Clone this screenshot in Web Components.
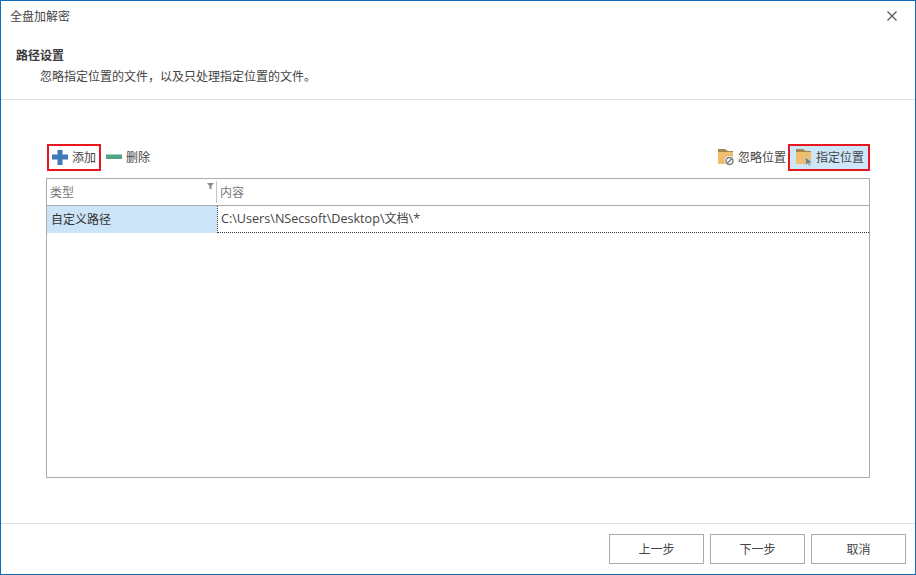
<!DOCTYPE html>
<html lang="zh">
<head>
<meta charset="utf-8">
<title>全盘加解密</title>
<style>
    html, body { margin: 0; height: 100%; background: #fff; }
</style>
</head>
<body>
<wizard-window heading="全盘加解密">
    <wizard-header heading="路径设置" note="忽略指定位置的文件&#xFF0C;以及只处理指定位置的文件。"></wizard-header>
    <path-panel></path-panel>
    <wizard-footer></wizard-footer>
</wizard-window>

<script>
const FONT = '"Open Sans", "Noto Sans CJK SC", sans-serif';

class WizardWindow extends HTMLElement {
    constructor() {
        super();
        this.attachShadow({ mode: 'open' });
    }

    connectedCallback() {
        this.shadowRoot.innerHTML = `
            <style>
                :host {
                    display: flex;
                    flex-direction: column;
                    box-sizing: border-box;
                    width: 916px;
                    height: 575px;
                    border: 1px solid #0b6cbc;
                    font-family: ${FONT};
                    font-size: 12px;
                    color: #444;
                    background: #fff;
                }
                .title {
                    display: flex;
                    justify-content: space-between;
                    align-items: center;
                    box-sizing: border-box;
                    height: 29px;
                    padding: 1px 18px 0 9px;
                    flex: none;
                }
                svg { display: block; }
            </style>
            <div class="title">
                <span>${this.getAttribute('heading')}</span>
                <svg width="10" height="10" viewBox="0 0 10 10"><path d="M.5.5l9 9M9.500.5l-9 9" stroke="#555" stroke-width="1.200" fill="none"/></svg>
            </div>
            <slot></slot>
        `;
    }
}

class WizardHeader extends HTMLElement {
    constructor() {
        super();
        this.attachShadow({ mode: 'open' });
    }

    connectedCallback() {
        this.shadowRoot.innerHTML = `
            <style>
                :host {
                    display: block;
                    flex: none;
                    height: 70px;
                    box-sizing: border-box;
                    padding: 17px 0 0 15px;
                    border-bottom: 1px solid #e0e0e0;
                }
                .h { font-weight: 700; line-height: 18px; color: #3a3a3a; }
                .n { margin: 3px 0 0 24px; line-height: 18px; }
            </style>
            <div class="h">${this.getAttribute('heading')}</div>
            <div class="n">${this.getAttribute('note')}</div>
        `;
    }
}

class ToolButton extends HTMLElement {
    constructor() {
        super();
        this.attachShadow({ mode: 'open' });
    }

    connectedCallback() {
        this.shadowRoot.innerHTML = `
            <style>
                :host {
                    display: flex;
                    align-items: center;
                    gap: var(--gap, 4px);
                    box-sizing: border-box;
                    height: 27px;
                    padding: 0 var(--pad-r, 3px) 0 var(--pad-l, 3px);
                    border: 2px solid transparent;
                    line-height: 18px;
                }
                :host([marked]) { border-color: #e8161f; }
                :host([active]) { background: #cde6f8; }
                ::slotted(svg) { display: block; flex: none; }
            </style>
            <slot name="icon"></slot>
            <span><slot></slot></span>
        `;
    }
}

class PathGrid extends HTMLElement {
    constructor() {
        super();
        this.attachShadow({ mode: 'open' });
    }

    connectedCallback() {
        this.shadowRoot.innerHTML = `
            <style>
                :host {
                    display: grid;
                    grid-template-columns: 170px 1fr;
                    grid-template-rows: 27px 27px 1fr;
                    flex: 1;
                    margin-top: 7px;
                    border: 1px solid #ababab;
                    line-height: 18px;
                }
                .hd {
                    position: relative;
                    display: flex;
                    align-items: center;
                    padding: 2px 0 0 3px;
                    color: #777;
                    border-bottom: 1px solid #ababab;
                }
                .hd.first::after {
                    content: "";
                    position: absolute;
                    right: 0;
                    top: 2px;
                    bottom: 2px;
                    width: 1px;
                    background: #c4c4c4;
                }
                .filter { position: absolute; right: 3px; top: 4px; }
                .type {
                    display: flex;
                    align-items: center;
                    padding-left: 4px;
                    background: #cce4f7;
                    color: #333;
                }
                .value {
                    display: flex;
                    align-items: center;
                    margin-top: -1px;
                    padding: 0 0 1px 3px;
                    border: 1px dotted #333;
                    border-right: 0;
                    color: #444;
                    white-space: pre;
                }
                .lat { font-size: 12.600px; }
            </style>
            <div class="hd first">类型
                <svg class="filter" width="7" height="6" viewBox="0 0 7 6"><path d="M0 0h7L4.500 3v3h-2V3z" fill="#8a8a8a"/></svg>
            </div>
            <div class="hd">内容</div>
            <div class="type">自定义路径</div>
            <div class="value"><span class="lat">C:\\Users\\NSecsoft\\Desktop\\</span><span>文档</span><span class="lat">\\*</span></div>
        `;
    }
}

class PathPanel extends HTMLElement {
    constructor() {
        super();
        this.attachShadow({ mode: 'open' });
    }

    connectedCallback() {
        const folder = `<path d="M0 3h15v12H0z" fill="#efbd6e"/><path d="M0 0h7l3 2h5v1H0z" fill="#a4864f"/>`;
        this.shadowRoot.innerHTML = `
            <style>
                :host {
                    display: flex;
                    flex-direction: column;
                    flex: 1;
                    min-height: 0;
                    padding: 44px 45px 45px;
                }
                .bar { display: flex; justify-content: space-between; padding-left: 1px; }
                .group { display: flex; gap: 3px; }
                .ignore { --pad-l: 0px; --pad-r: 0px; --gap: 2px; }
                .locate { --pad-l: 6px; --pad-r: 4px; --gap: 2px; }
                .remove { --pad-l: 0px; }
            </style>
            <div class="bar">
                <div class="group">
                    <tool-button marked>
                        <svg slot="icon" width="16" height="15" viewBox="0 0 16 15"><path d="M5.500 0h5v4.500H16v5h-5.500V15h-5V9.500H0v-5h5.500z" fill="#3d7ab8"/></svg>
                        添加
                    </tool-button>
                    <tool-button class="remove">
                        <svg slot="icon" width="16" height="15" viewBox="0 0 16 15"><rect y="4.500" width="16" height="4.500" fill="#4fa582"/></svg>
                        删除
                    </tool-button>
                </div>
                <div class="group" style="gap:0">
                    <tool-button class="ignore">
                        <svg slot="icon" width="18" height="17" viewBox="0 0 18 17">${folder}
                            <circle cx="11.500" cy="12" r="5" fill="#fff"/>
                            <circle cx="11.500" cy="12" r="3.500" fill="none" stroke="#7d7d7d" stroke-width="1.500"/>
                            <path d="M9 14.500l5-5" stroke="#7d7d7d" stroke-width="1.500"/>
                        </svg>
                        忽略位置
                    </tool-button>
                    <tool-button class="locate" marked active>
                        <svg slot="icon" width="18" height="17" viewBox="0 0 18 17">${folder}
                            <path d="M9 8l7.500 5.500-3.200.4 1.700 2.500-1.500.6-1.600-2.600-2 1.800z" fill="#777c82" stroke="#cde6f8" stroke-width=".6"/>
                        </svg>
                        指定位置
                    </tool-button>
                </div>
            </div>
            <path-grid></path-grid>
        `;
    }
}

class WizardFooter extends HTMLElement {
    constructor() {
        super();
        this.attachShadow({ mode: 'open' });
    }

    connectedCallback() {
        const labels = ['上一步', '下一步', '取消'];
        this.shadowRoot.innerHTML = `
            <style>
                :host {
                    display: flex;
                    justify-content: flex-end;
                    gap: 6px;
                    flex: none;
                    height: 51px;
                    box-sizing: border-box;
                    padding: 10px 9px 0 0;
                    border-top: 1px solid #e0e0e0;
                }
                button {
                    width: 95px;
                    height: 30px;
                    padding: 0;
                    font: inherit;
                    color: #444;
                    background: #fff;
                    border: 1px solid #ababab;
                }
            </style>
            ${labels.map(l => `<button>${l}</button>`).join('')}
        `;
    }
}

customElements.define('wizard-window', WizardWindow);
customElements.define('wizard-header', WizardHeader);
customElements.define('tool-button', ToolButton);
customElements.define('path-grid', PathGrid);
customElements.define('path-panel', PathPanel);
customElements.define('wizard-footer', WizardFooter);
</script>
</body>
</html>
